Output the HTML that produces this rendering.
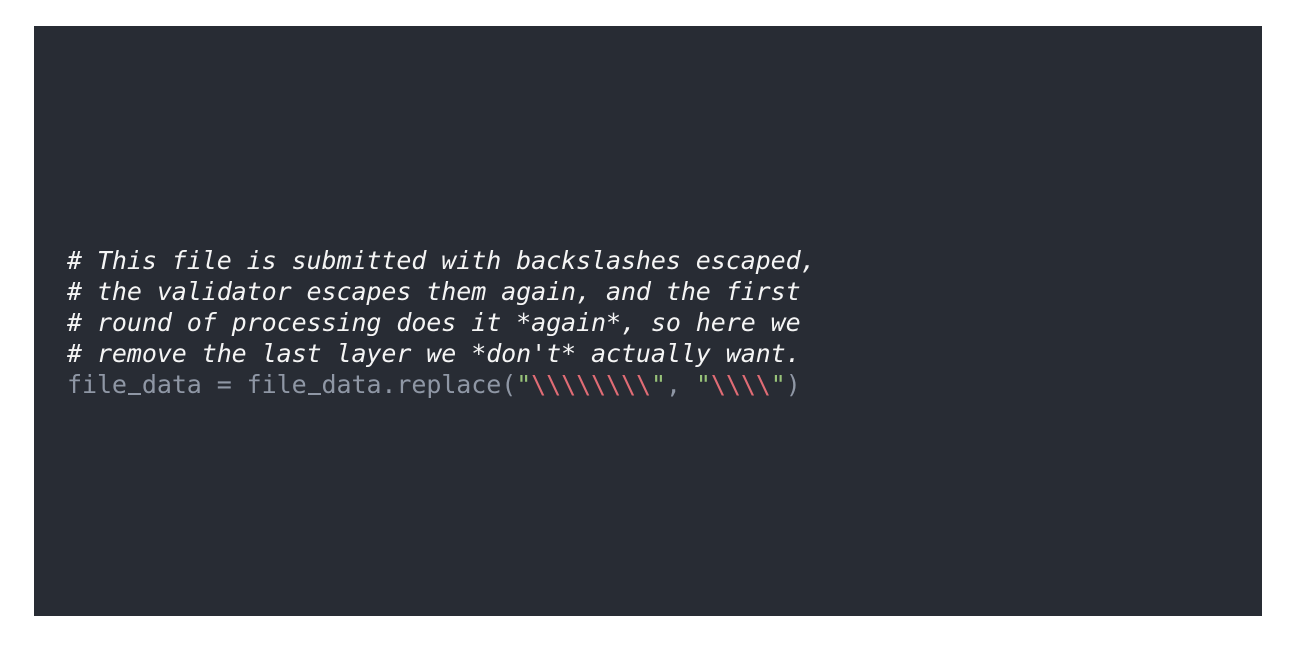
<!DOCTYPE html>
<html><head><meta charset="utf-8"><style>
html,body{margin:0;padding:0;background:#fff;width:1296px;height:658px;overflow:hidden}
.box{position:absolute;left:34px;top:26px;width:1228px;height:590px;background:#282c34}
pre{position:absolute;left:67px;top:245px;margin:0;padding-bottom:10px;font-family:"DejaVu Sans Mono","Liberation Mono",monospace;font-size:25px;letter-spacing:-0.08px;line-height:31px;color:#abb2bf}
.c{color:#f5f5f5;font-style:italic}
.r{color:#e06c75}.g{color:#98c379}.p{color:#8f97a5}
.u{position:relative;color:transparent}
.u::after{content:"";position:absolute;left:1px;right:1px;bottom:4px;height:2px;background:#8f97a5}
</style></head><body>
<div class="box"></div>
<pre><span class="c"># This file is submitted with backslashes escaped,
# the validator escapes them again, and the first
# round of processing does it *again*, so here we
# remove the last layer we *don't* actually want.</span>
<span class="p">file<span class="u">_</span>data = file<span class="u">_</span>data.replace(<span class="g">"</span><span class="r">\\\\\\\\</span><span class="g">"</span>, <span class="g">"</span><span class="r">\\\\</span><span class="g">"</span>)</span></pre>
</body></html>
